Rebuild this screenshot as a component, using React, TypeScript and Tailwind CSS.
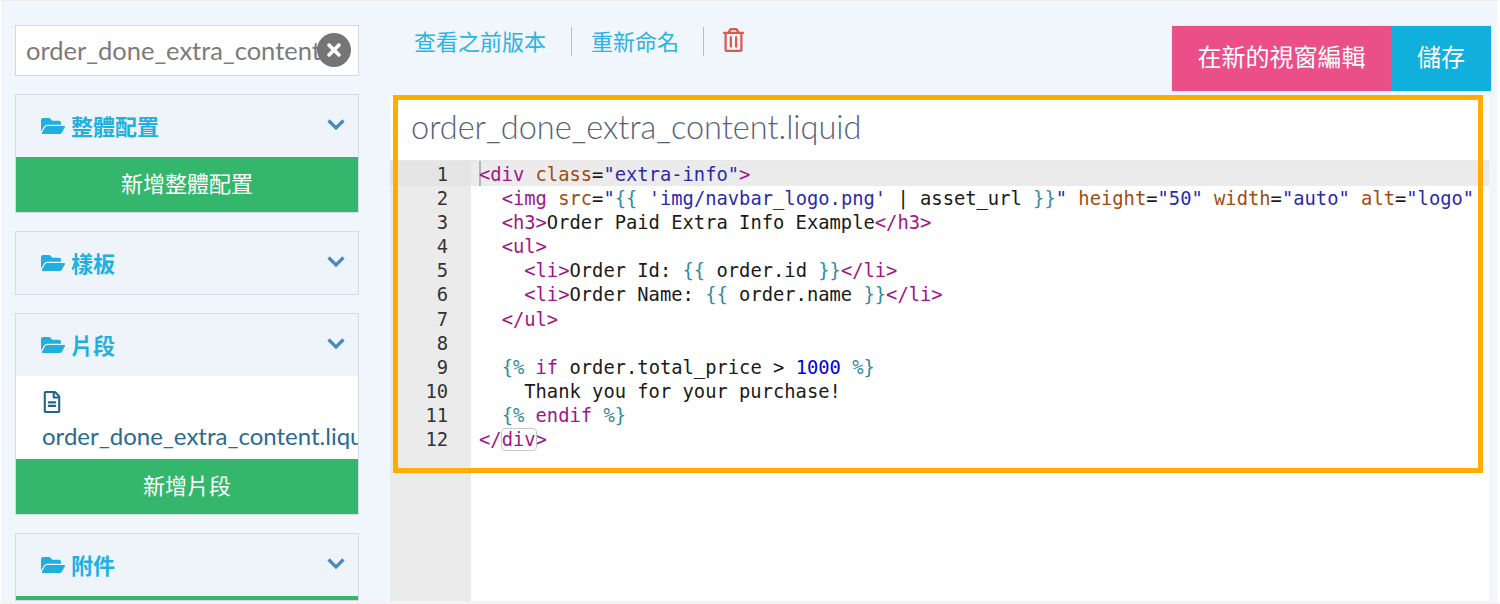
import React from 'react'
import { FaFolderOpen, FaRegFileAlt, FaRegTrashAlt, FaTimes } from 'react-icons/fa'

const cjk = "font-['Lato','Noto_Sans_CJK_TC',sans-serif]"

// token kinds: t tag, a attribute, s string, l liquid, k keyword, n number, p plain
const colors: Record<string, string> = {
  t: 'text-[#a1148c]',
  a: 'text-[#a04c10]',
  s: 'text-[#2b2baa]',
  l: 'text-[#2f8a9e]',
  k: 'text-[#a1148c]',
  n: 'text-[#0000e0]',
  p: 'text-[#1a1a1a]',
}

const code: [string, string][][] = [
  [['t', '<div'], ['p', ' '], ['a', 'class'], ['p', '='], ['s', '"extra-info"'], ['t', '>']],
  [
    ['p', '  '], ['t', '<img'], ['p', ' '], ['a', 'src'], ['p', '='], ['s', '"'], ['l', '{{'], ['p', ' '],
    ['s', "'img/navbar_logo.png'"], ['p', ' | asset_url '], ['l', '}}'], ['s', '"'], ['p', ' '],
    ['a', 'height'], ['p', '='], ['s', '"50"'], ['p', ' '], ['a', 'width'], ['p', '='], ['s', '"auto"'], ['p', ' '],
    ['a', 'alt'], ['p', '='], ['s', '"logo"'],
  ],
  [['p', '  '], ['t', '<h3>'], ['p', 'Order Paid Extra Info Example'], ['t', '</h3>']],
  [['p', '  '], ['t', '<ul>']],
  [['p', '    '], ['t', '<li>'], ['p', 'Order Id: '], ['l', '{{'], ['p', ' order.id '], ['l', '}}'], ['t', '</li>']],
  [['p', '    '], ['t', '<li>'], ['p', 'Order Name: '], ['l', '{{'], ['p', ' order.name '], ['l', '}}'], ['t', '</li>']],
  [['p', '  '], ['t', '</ul>']],
  [],
  [['p', '  '], ['l', '{%'], ['p', ' '], ['k', 'if'], ['p', ' order.total_price > '], ['n', '1000'], ['p', ' '], ['l', '%}']],
  [['p', '    Thank you for your purchase!']],
  [['p', '  '], ['l', '{%'], ['p', ' '], ['k', 'endif'], ['p', ' '], ['l', '%}']],
  [['t', '</'], ['m', 'div'], ['t', '>']],
]

function PanelHeader({ title }: { title: string }) {
  return (
    <div className="flex h-[62px] items-center justify-between bg-[#eff4fb] pl-[25px] pr-[13px]">
      <div className="flex items-center gap-[6px]">
        <FaFolderOpen className="h-[22px] w-[24px] text-[#1fb0e0]" />
        <span className="text-[22px] font-bold text-[#1fb0e0]">{title}</span>
      </div>
      <svg viewBox="0 0 18 12" className="mb-[2px] h-[12px] w-[18px]" fill="none" stroke="#4a8bbd" strokeWidth="3.2">
        <polyline points="1.5,1.5 9,9 16.5,1.5" />
      </svg>
    </div>
  )
}

function GreenButton({ label, className }: { label: string; className: string }) {
  return <div className={`flex items-center justify-center bg-[#34b76c] pb-[2px] text-[22px] text-white ${className}`}>{label}</div>
}

function Panel({ children, className = '' }: { children: React.ReactNode; className?: string }) {
  return <div className={`overflow-hidden border border-[#d3dce8] bg-[#eff4fb] ${className}`}>{children}</div>
}

export default function App() {
  return (
    <div className={`relative flex h-[604px] w-[1500px] overflow-hidden border-t border-r-[3px] border-b-[3px] border-l border-t-[#eeeeee] border-r-white border-b-[#f3f3f3] border-l-white bg-[#f1f5fc] ${cjk}`}>
      {/* Sidebar */}
      <aside className="flex w-[389px] shrink-0 flex-col gap-[18px] pt-[24px] pr-[31px] pl-[14px]">
        <div className="relative flex h-[51px] items-center overflow-hidden border border-[#d3d8e2] bg-white pl-[10px] text-[25.5px] whitespace-nowrap text-[#7b7b7b]">
          order_done_extra_content
          <div className="absolute top-[7px] right-[7px] flex h-[34px] w-[34px] items-center justify-center rounded-full bg-[#757575]">
            <FaTimes className="h-[20px] w-[18px] text-white" />
          </div>
        </div>
        <Panel>
          <PanelHeader title="整體配置" />
          <GreenButton label="新增整體配置" className="h-[55px]" />
        </Panel>
        <Panel>
          <PanelHeader title="樣板" />
        </Panel>
        <Panel>
          <PanelHeader title="片段" />
          <div className="flex h-[83px] flex-col bg-white pt-[15px] pl-[26px]">
            <FaRegFileAlt className="h-[22px] w-[20px] text-[#22628f]" />
            <span className="mt-[8px] text-[24px] leading-[30px] whitespace-nowrap text-[#2a6a94]">
              order_done_extra_content.liquid
            </span>
          </div>
          <GreenButton label="新增片段" className="h-[55px]" />
        </Panel>
        <Panel className="flex-1">
          <PanelHeader title="附件" />
          <GreenButton label="" className="h-[12px]" />
        </Panel>
      </aside>

      {/* Main */}
      <main className="flex min-w-0 flex-1 flex-col pr-[8px]">
        <div className="flex h-[96px] shrink-0 items-start justify-between">
          <div className="flex items-center pt-[24px] pl-[24px] text-[22px] text-[#2bb3e3]">
            <span>查看之前版本</span>
            <span className="mr-[19px] ml-[25px] h-[29px] w-px bg-[#b9bdc4]" />
            <span>重新命名</span>
            <span className="mr-[19px] ml-[24px] h-[29px] w-px bg-[#b9bdc4]" />
            <FaRegTrashAlt className="mb-[3px] h-[24px] w-[21px] text-[#e2574c]" />
          </div>
          <div className="mt-[24px] mr-[-3px] flex h-[67px] border border-[#e4f1fa] pb-0 text-[24px] text-white">
            <div className="flex w-[219px] items-center justify-center bg-[#ea5087] pb-[3px]">在新的視窗編輯</div>
            <div className="flex w-[100px] items-center justify-center bg-[#10afdc] pb-[3px]">儲存</div>
          </div>
        </div>

        <div className="flex h-[63px] shrink-0 items-center bg-white pb-[2px] pl-[21px] text-[32.5px] font-light text-[#56627a]">
          order_done_extra_content.liquid
        </div>

        <div className="relative flex min-h-0 flex-1 border-t border-[#e8e8e8] bg-white text-[18.8px] leading-[24.1px] whitespace-pre font-['DejaVu_Sans_Mono',monospace]">
          <div className="absolute top-0 right-0 left-0 h-[25px] bg-[#ebebeb]" />
          <div className="relative w-[81px] shrink-0 bg-[#ebebeb] pt-[2px] pr-[23px] text-right text-[#333]">
            <div className="absolute top-0 right-0 left-0 h-[25px] bg-[#e4e4e4]" />
            {code.map((_, i) => (
              <div key={i} className="relative h-[24.1px]">{i + 1}</div>
            ))}
          </div>
          <div className="relative min-w-0 flex-1 overflow-hidden pt-[2px] pl-[8px]">
            <div className="absolute top-0 left-[8px] h-[25px] w-[2px] bg-[#b5b5b5]" />
            {code.map((line, i) => (
              <div key={i} className="relative h-[24.1px]">
                {line.map(([kind, text], j) =>
                  kind === 'm' ? (
                    <span key={j} className="rounded-[3px] text-[#a1148c] outline outline-[#c8c8c8]">{text}</span>
                  ) : (
                    <span key={j} className={colors[kind]}>{text}</span>
                  ),
                )}
              </div>
            ))}
          </div>
        </div>
      </main>

      {/* Orange highlight drawn over the editor */}
      <div className="pointer-events-none absolute top-[94px] left-[392px] h-[378px] w-[1090px] border-[5px] border-[#ffae00]" />
    </div>
  )
}
